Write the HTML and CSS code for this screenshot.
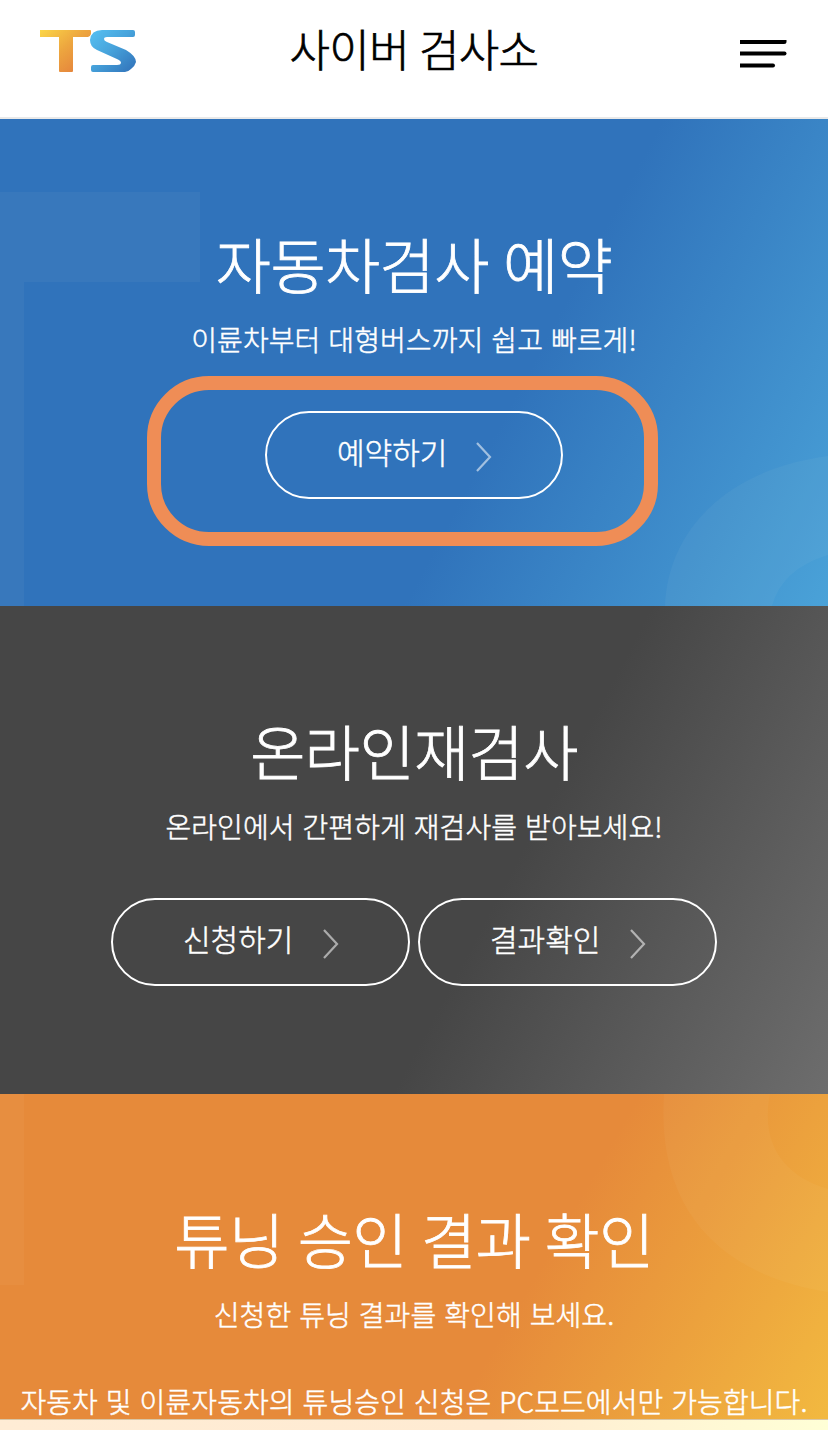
FILE: index.html
```html
<!DOCTYPE html>
<html lang="ko">
<head>
  <meta charset="UTF-8">
  <title>사이버 검사소</title>
  <link rel="stylesheet" href="styles.css">
</head>
<body>
<header class="header">
  <a class="logo" href="#">
    <svg width="98" height="46" viewBox="0 0 98 46">
      <defs>
        <linearGradient id="logo-t" x1="0" y1="0" x2="1" y2="1">
          <stop offset="0" stop-color="#fbd648"/>
          <stop offset=".45" stop-color="#eda63f"/>
          <stop offset="1" stop-color="#e2783b"/>
        </linearGradient>
        <linearGradient id="logo-s" x1="0" y1="0" x2="1" y2="1">
          <stop offset="0" stop-color="#56c1f2"/>
          <stop offset=".45" stop-color="#47a4dc"/>
          <stop offset="1" stop-color="#3070b8"/>
        </linearGradient>
      </defs>
      <path fill="url(#logo-t)" d="M0 2H50Q51 2 51 3V6Q50 9 48 9H33V43Q33 44 32 44H20Q19 44 19 43V9H0Z"/>
      <path fill="url(#logo-s)" d="M62 2H93Q95 2 95 4V7Q95 9 93 9H67Q64 9 64 11Q64 13 67 14L86 22Q96 28 96 34Q95 38 91 41Q88 44 85 44H53Q51 44 51 42V39Q51 37 53 37H77Q81 37 81 34.500Q81 33 78 31.500L57 22Q50 19 50 12Q51 2 62 2Z"/>
    </svg>
  </a>
  <h1 class="site-title">사이버 검사소</h1>
  <button class="menu" aria-label="메뉴">
    <svg width="48" height="30" viewBox="0 0 48 30">
      <path d="M0 0H46.500V1.500Q46.500 4 44 4H0Z"/>
      <path d="M0 11.500H44.500Q46.500 11.500 46.500 13.500Q46.500 15.500 44.500 15.500H0Z"/>
      <path d="M0 23.500H33Q35 23.500 35 25.500Q35 27.500 33 27.500H0Z"/>
    </svg>
  </button>
</header>

<main>
  <section class="panel panel-reserve">
    <svg class="panel-mark" width="828" height="487" viewBox="0 0 828 487">
      <path d="M0 73H200V163H24V487H0Z"/>
      <path d="M665 487C668 410 728 350 828 337V436Q782 450 772 487Z"/>
    </svg>
    <h2 class="panel-title">자동차검사 예약</h2>
    <p class="panel-text">이륜차부터 대형버스까지 쉽고 빠르게!</p>
    <div class="buttons">
      <a class="btn" href="#">예약하기<svg class="arrow" width="16" height="30" viewBox="0 0 16 30"><path d="M1 1L14 15L1 29"/></svg></a>
    </div>
    <span class="highlight"></span>
  </section>

  <section class="panel panel-recheck">
    <h2 class="panel-title">온라인재검사</h2>
    <p class="panel-text">온라인에서 간편하게 재검사를 받아보세요!</p>
    <div class="buttons">
      <a class="btn" href="#">신청하기<svg class="arrow" width="16" height="30" viewBox="0 0 16 30"><path d="M1 1L14 15L1 29"/></svg></a>
      <a class="btn" href="#">결과확인<svg class="arrow" width="16" height="30" viewBox="0 0 16 30"><path d="M1 1L14 15L1 29"/></svg></a>
    </div>
  </section>

  <section class="panel panel-tuning">
    <svg class="panel-mark" width="828" height="325" viewBox="0 0 828 325">
      <path d="M0 0H24V191H0Z"/>
      <path d="M664 0C656 116 720 181 828 198V95C784 82 760 50 770 0Z"/>
    </svg>
    <h2 class="panel-title">튜닝 승인 결과 확인</h2>
    <p class="panel-text">신청한 튜닝 결과를 확인해 보세요.</p>
    <p class="panel-notice">자동차 및 이륜자동차의 튜닝승인 신청은 PC모드에서만 가능합니다.</p>
  </section>
</main>
<div class="bottom-bar"></div>
</body>
</html>
```
FILE: styles.css
```css
*{
  box-sizing: border-box;
}
body{
  margin: 0;
  background: #fff;
  font-family: "Noto Sans CJK KR", sans-serif;
  font-weight: 300;
  -webkit-text-stroke: .5px;
}
h1, h2, p{
  margin: 0;
  font-weight: 300;
  white-space: nowrap;
}

.header{
  display: flex;
  justify-content: space-between;
  height: 119px;
  padding: 0 40px;
  border-bottom: 2px solid #e9e9e9;
}
.logo{
  width: 98px;
  padding-top: 28px;
}
.logo svg,
.menu svg{
  display: block;
  filter: blur(.7px);
}
.site-title{
  padding-top: 16px;
  font-size: 44px;
  line-height: 64px;
  letter-spacing: -.7px;
  word-spacing: -1.5px;
  color: #000;
  -webkit-text-stroke: .7px;
}
.menu{
  width: 98px;
  height: 70px;
  padding: 40px 0 0 50px;
  border: 0;
  background: none;
}

.panel{
  position: relative;
  display: flex;
  flex-direction: column;
  align-items: center;
  padding-top: 100px;
  color: #fff;
}
.panel-reserve{
  height: 487px;
  background: linear-gradient(118deg, #3073bb 61%, #4aa2d8 100%);
}
.panel-recheck{
  height: 488px;
  background: linear-gradient(118deg, #464646 60%, #6d6d6d 100%);
}
.panel-tuning{
  height: 325px;
  background: linear-gradient(120deg, #e68a3a 63%, #f2b940 100%);
}
.panel-mark{
  position: absolute;
  top: 0;
  left: 0;
  fill: rgba(255,250,220,.04);
}
.panel-title{
  position: relative;
  font-size: 60px;
  line-height: 88px;
  letter-spacing: -.6px;
  word-spacing: -2px;
  -webkit-text-stroke: .8px;
}
.panel-text,
.panel-notice{
  position: relative;
  font-size: 28px;
  line-height: 42px;
  letter-spacing: .08px;
}
.panel-text{
  margin-top: 11px;
}
.panel-notice{
  margin-top: 49px;
  line-height: 34px;
}

.buttons{
  display: flex;
  gap: 8px;
  margin-top: 51px;
}
.btn{
  display: flex;
  align-items: center;
  width: 299px;
  height: 88px;
  padding: 0 0 8px 70px;
  border: 2px solid #fff;
  border-radius: 44px;
  color: #fff;
  font-size: 30px;
  text-decoration: none;
}
.panel-reserve .btn{
  width: 298px;
}
.arrow{
  margin: 11px 0 0 30px;
  fill: none;
  stroke: #fff;
  stroke-opacity: .55;
  stroke-width: 2.2;
}
.panel-reserve .arrow{
  margin-left: 29px;
}

.highlight{
  position: absolute;
  top: 257px;
  left: 147px;
  width: 511px;
  height: 170px;
  border: 14px solid #ef8d56;
  border-radius: 62px;
}

.bottom-bar{
  height: 11px;
  border-top: 1px solid #d9c6a5;
  background: linear-gradient(90deg, #ffecd5 0%, #ffebd2 60%, #ffffd6 100%);
}
```
